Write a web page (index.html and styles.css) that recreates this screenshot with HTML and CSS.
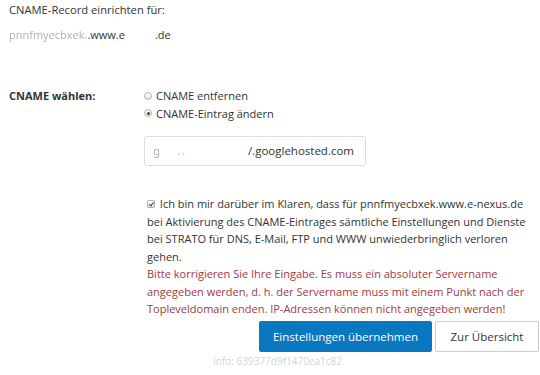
FILE: index.html
```html
<!DOCTYPE html>
<html lang="de">
<head>
    <meta charset="UTF-8">
    <meta name="viewport" content="width=device-width, initial-scale=1.0">
    <title>CNAME-Record einrichten</title>
    <link rel="stylesheet" href="styles.css">
</head>
<body>
    <div class="page">
        <div class="intro">
            <p class="title">CNAME-Record einrichten für:</p>
            <p class="domain"><span class="faded">pnnfmyecbxek.</span>.www.e<span class="gap"></span>.de</p>
        </div>

        <form class="form-row">
            <label class="row-label">CNAME wählen:</label>
            <div class="row-body">
                <label class="option"><input type="radio" name="cname" class="radio"> CNAME entfernen</label>
                <label class="option"><input type="radio" name="cname" class="radio" checked> CNAME-Eintrag ändern</label>

                <div class="text-field">
                    <span class="faded">ɡ</span><span class="faded small">, ,</span><span class="field-value">/.googlehosted.com</span>
                </div>

                <div class="confirm">
                    <label><input type="checkbox" class="check" checked> Ich bin mir darüber im Klaren, dass für pnnfmyecbxek.www.e-nexus.de bei Aktivierung des CNAME-Eintrages sämtliche Einstellungen und Dienste bei STRATO für DNS, E-Mail, FTP und WWW unwiederbringlich verloren gehen.</label>
                    <p class="error">Bitte korrigieren Sie Ihre Eingabe. Es muss ein absoluter Servername angegeben werden, d. h. der Servername muss mit einem Punkt nach der Topleveldomain enden. IP-Adressen können nicht angegeben werden!</p>
                </div>
            </div>
        </form>

        <div class="actions">
            <button class="btn btn-primary">Einstellungen übernehmen</button>
            <button class="btn btn-back">Zur Übersicht</button>
        </div>
        <div class="info">Info: 639377d9f1470ea1c82</div>
    </div>
</body>
</html>
```

FILE: styles.css
```css
* {
    margin: 0;
    padding: 0;
    box-sizing: border-box;
}

body {
    background-color: #fff;
    color: #333;
    font-family: 'Open Sans', 'Noto Sans', sans-serif;
    font-size: 11px;
    line-height: 17.5px;
}

.page {
    padding: 1px 1px 0 9px;
}

.intro p {
    line-height: 18px;
}

.title {
    font-size: 11.2px;
}

.domain {
    margin-top: 7px;
    font-size: 11px;
}

.faded {
    color: #b0b0b0;
    filter: blur(0.7px);
}

.gap {
    display: inline-block;
    width: 30px;
}

.form-row {
    display: grid;
    grid-template-columns: 135px 1fr;
    margin-top: 43px;
    padding-right: 4px;
}

.row-label {
    font-weight: 700;
}

.option {
    display: flex;
    align-items: center;
    gap: 4px;
}

.radio {
    appearance: none;
    width: 8px;
    height: 8px;
    border: 1px solid #b5b5b5;
    border-radius: 50%;
    background: linear-gradient(#fff, #e4e4e4);
    position: relative;
}

.radio:checked::after {
    content: "";
    position: absolute;
    left: 1.5px;
    top: 1.5px;
    width: 3px;
    height: 3px;
    border-radius: 50%;
    background-color: #444;
}

.text-field {
    width: 222px;
    height: 30px;
    margin-top: 14px;
    padding: 0 11px 0 8px;
    border: 1px solid #ddd;
    border-radius: 3px;
    display: flex;
    align-items: center;
    gap: 18px;
    font-size: 11.5px;
    white-space: nowrap;
}

.small {
    font-size: 9px;
}

.field-value {
    margin-left: auto;
}

.confirm {
    margin-top: 29px;
    padding-left: 3px;
}

.check {
    appearance: none;
    width: 8px;
    height: 8px;
    margin-right: 2px;
    border: 1px solid #b5b5b5;
    border-radius: 1px;
    background: linear-gradient(#fff, #e0e0e0);
    position: relative;
    vertical-align: 0;
}

.check:checked::after {
    content: "";
    position: absolute;
    left: 1.5px;
    top: 0;
    width: 2px;
    height: 4px;
    border: solid #444;
    border-width: 0 1.5px 1.5px 0;
    transform: rotate(40deg);
}

.error {
    color: #a33a44;
}

.actions {
    display: flex;
    justify-content: flex-end;
    gap: 3px;
    margin-top: 3px;
}

.btn {
    height: 31px;
    font-family: inherit;
    font-size: 11.5px;
    white-space: nowrap;
    color: #333;
    background-color: #fff;
    border: 1px solid #ccc;
    border-radius: 2px;
}

.btn-primary {
    width: 173px;
    color: #fff;
    background-color: #0a78c0;
    border-color: #0a78c0;
}

.btn-back {
    width: 104px;
}

.info {
    margin: 2px 0 0 204px;
    font-size: 10px;
    line-height: 14px;
    color: #d4d4d4;
}
```
